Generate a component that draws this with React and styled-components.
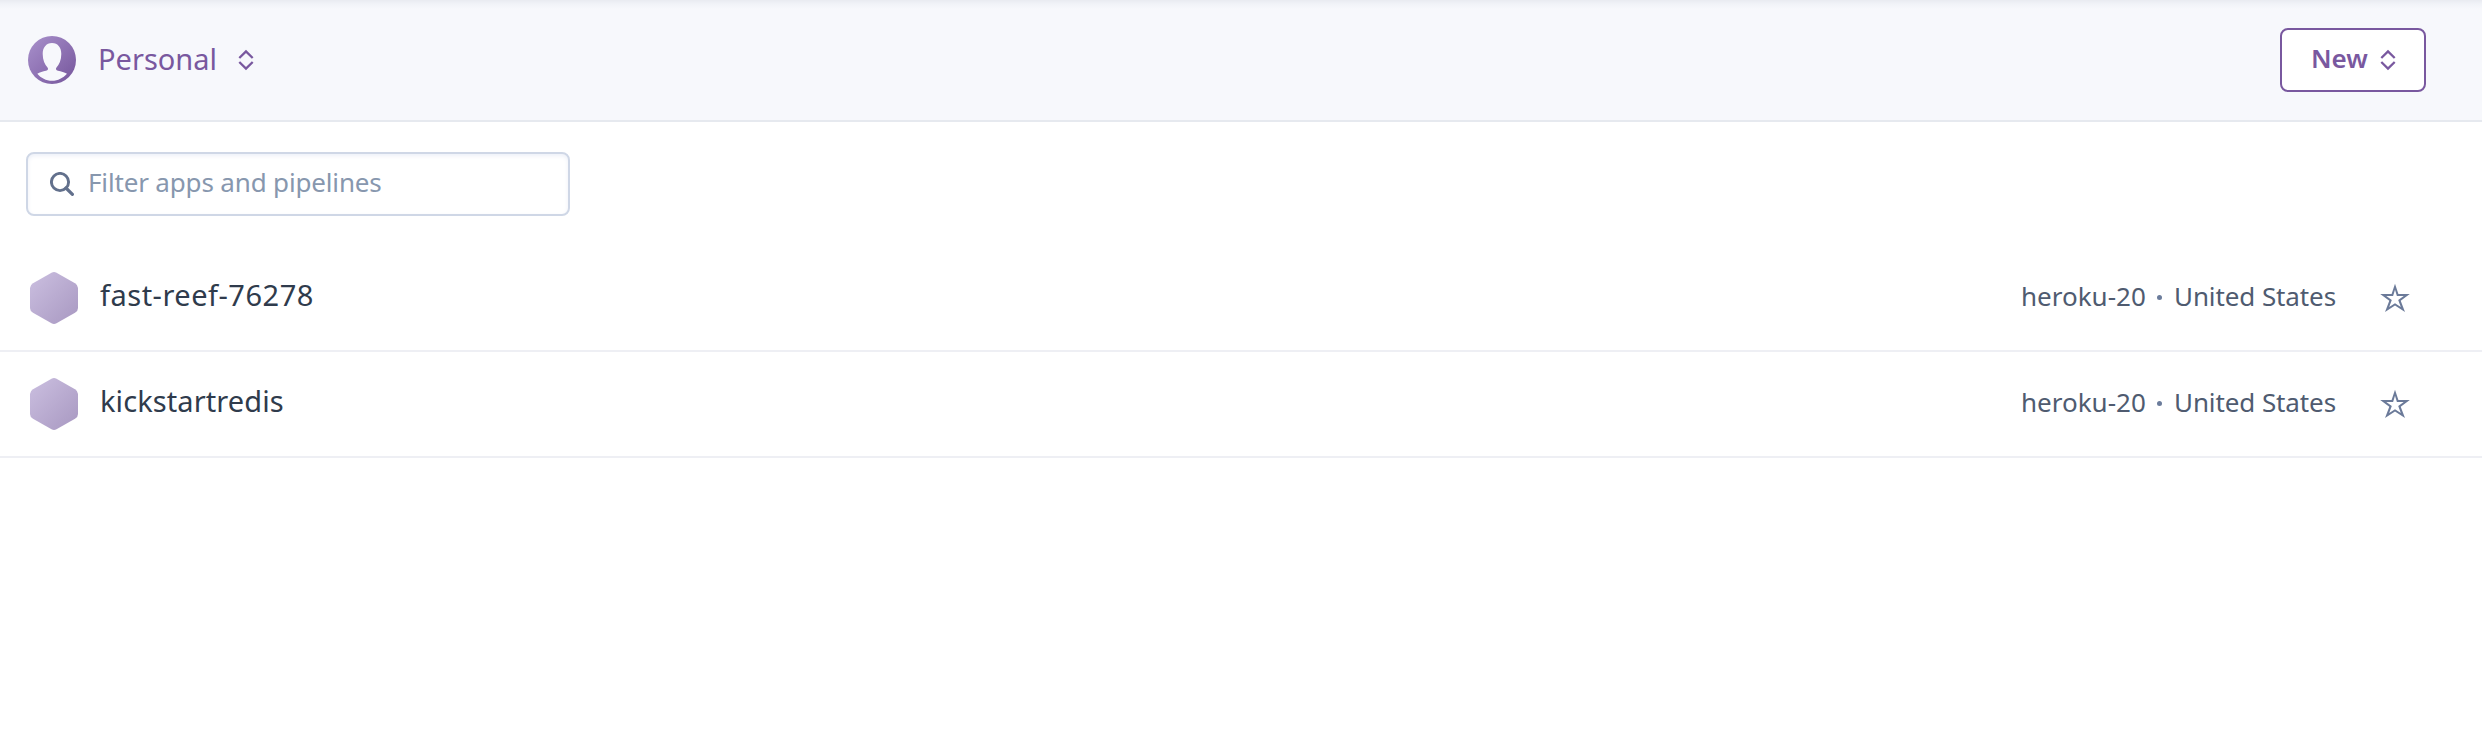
import React from "react";
import styled, { createGlobalStyle } from "styled-components";

const GlobalStyle = createGlobalStyle`
  * { box-sizing: border-box; }
  body {
    margin: 0;
    background: #fff;
    font-family: "Noto Sans", "Open Sans", sans-serif;
  }
  svg { display: block; flex: none; }
`;

const Page = styled.div`
  min-height: 730px;
  background: #fff;
`;

const Header = styled.header`
  height: 122px;
  padding: 0 56px 0 28px;
  display: flex;
  align-items: center;
  justify-content: space-between;
  background: linear-gradient(#e9ebf1 0, #f1f3f8 4px, #f7f8fc 9px);
  border-bottom: 2px solid #e6e9ef;
`;

const AccountSwitcher = styled.div`
  display: flex;
  align-items: center;
`;

const Label = styled.span`
  width: ${(p) => p.$width}px;
  margin-left: ${(p) => p.$left || 0}px;
  padding-bottom: ${(p) => (p.$lift || 0) * 2}px;
  flex: none;
  text-align: left;
  white-space: nowrap;
  font-size: ${(p) => p.$size}px;
  font-weight: ${(p) => p.$weight || 400};
  letter-spacing: ${(p) => p.$spacing || 0}px;
  line-height: 40px;
  color: ${(p) => p.$color};
`;

const NewButton = styled.button`
  width: 146px;
  height: 64px;
  padding: 0 0 0 29px;
  display: flex;
  align-items: center;
  font-family: inherit;
  background: #fff;
  border: 2px solid #79589f;
  border-radius: 8px;
`;

const FilterBar = styled.div`
  height: 124px;
  padding: 30px 26px;
`;

const FilterField = styled.label`
  width: 544px;
  height: 64px;
  padding-left: 22px;
  display: flex;
  align-items: center;
  background: #fff;
  border: 2px solid #cfd7e6;
  border-radius: 8px;
  box-shadow: inset 0 2px 4px #edf0f8;
`;

const FilterInput = styled.input`
  width: 450px;
  height: 44px;
  margin-left: 14px;
  padding: 0 0 4px;
  border: 0;
  outline: 0;
  background: transparent;
  font-family: inherit;
  font-size: 26px;
  letter-spacing: -0.16px;
  &::placeholder { color: #8797ae; opacity: 1; }
`;

const AppRow = styled.div`
  height: 106px;
  padding: 0 72px 0 30px;
  display: flex;
  align-items: center;
  border-bottom: 2px solid #eeeff4;
`;

const AppMeta = styled.div`
  margin-left: auto;
  display: flex;
  align-items: center;
`;

const Dot = styled.span`
  width: 5px;
  height: 5px;
  margin-bottom: 1px;
  flex: none;
  border-radius: 50%;
  background: #6b7c9b;
`;

const StarSlot = styled.span`
  margin-left: 44px;
`;

const Avatar = () => (
  <svg width="48" height="48" viewBox="0 0 48 48">
    <defs>
      <linearGradient id="avatar" x1="0" y1="0" x2="1" y2="1">
        <stop offset="0" stopColor="#a991cc" />
        <stop offset="1" stopColor="#75559b" />
      </linearGradient>
    </defs>
    <circle cx="24" cy="24" r="24" fill="url(#avatar)" />
    <path
      fill="#f7f8fc"
      d="M24 7C18 7 14.7 11.700 14.700 18C14.700 24 16.800 28.500 19.500 31.500C20.600 33 20 34.200 18 34.700C15 35.500 11.500 36 9.300 37.700C13 42 18 44.700 24 44.700S35 42 39 37.700C36.500 36 33 35.500 30 34.700C28 34.200 27.400 33 28.500 31.500C31.200 28.500 33.300 24 33.300 18C33.300 11.700 30 7 24 7Z"
    />
  </svg>
);

const Chevrons = () => (
  <svg width="16" height="22" viewBox="0 0 16 22" fill="none" stroke="#79589f" strokeWidth="2.3">
    <path d="M1.300 9L8 2.400L14.700 9M1.300 13L8 19.600L14.700 13" />
  </svg>
);

const SearchIcon = () => (
  <svg width="24" height="24" viewBox="0 0 24 24" fill="none" stroke="#62708c">
    <circle cx="10" cy="10" r="8.600" strokeWidth="2.900" />
    <path d="M16 16L22.400 22.400" strokeWidth="3.200" strokeLinecap="round" />
  </svg>
);

const Hexagon = ({ id }) => (
  <svg width="48" height="52" viewBox="0 0 48 52">
    <defs>
      <linearGradient id={id} x1="0" y1="0" x2="1" y2="1">
        <stop offset="0" stopColor="#cbbfe0" />
        <stop offset="1" stopColor="#a898c1" />
      </linearGradient>
    </defs>
    <path
      fill={`url(#${id})`}
      d="M21.500 .7Q24 -.5 26.500 .7L45 11.200Q48 13 48 16V36Q48 39 45 40.800L26.500 51.300Q24 52.500 21.500 51.300L3 40.800Q0 39 0 36V16Q0 13 3 11.200Z"
    />
  </svg>
);

const Star = () => (
  <svg width="30" height="30" viewBox="0 0 30 30" fill="#6b7a99">
    <path
      fillRule="evenodd"
      d="M15 .8L18.400 10.900H29.800L20.700 17.700L25 29L15 22.600L5 29L9.300 17.700L.2 10.900H11.600ZM15 6.800L13.100 13H6.300L11.800 17L9.200 24L15 20.200L20.800 24L18.200 17L23.700 13H16.900Z"
    />
  </svg>
);

const apps = [
  { name: "fast-reef-76278", spacing: 0.5 },
  { name: "kickstartredis", spacing: 0.1 },
];

export default function App() {
  return (
    <Page>
      <GlobalStyle />
      <Header>
        <AccountSwitcher>
          <Avatar />
          <Label $width={140} $left={22} $size={29} $lift={1} $color="#79589f">Personal</Label>
          <Chevrons />
        </AccountSwitcher>
        <NewButton>
          <Label $width={69} $size={26} $lift={2} $weight={600} $color="#79589f">New</Label>
          <Chevrons />
        </NewButton>
      </Header>
      <FilterBar>
        <FilterField>
          <SearchIcon />
          <FilterInput placeholder="Filter apps and pipelines" />
        </FilterField>
      </FilterBar>
      {apps.map((app) => (
        <AppRow key={app.name}>
          <Hexagon id={app.name} />
          <Label $width={300} $left={22} $size={29} $lift={3} $spacing={app.spacing} $color="#2f3b4c">{app.name}</Label>
          <AppMeta>
            <Label $width={136} $size={26} $lift={2} $color="#4f5b70">heroku-20</Label>
            <Dot />
            <Label $width={162} $left={12} $size={26} $lift={2} $spacing={-0.1} $color="#4f5b70">United States</Label>
            <StarSlot><Star /></StarSlot>
          </AppMeta>
        </AppRow>
      ))}
    </Page>
  );
}
